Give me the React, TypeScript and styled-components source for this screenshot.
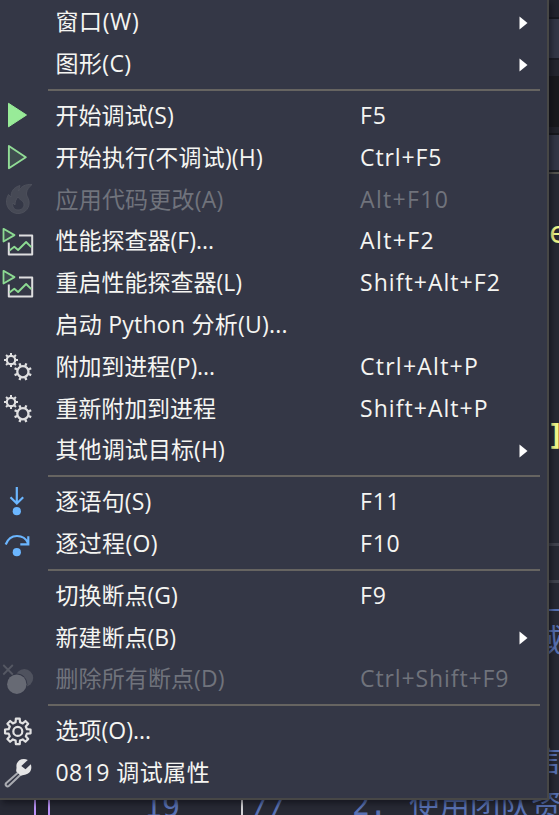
import React from "react";
import styled, { createGlobalStyle } from "styled-components";

const Global = createGlobalStyle`
  html, body { margin: 0; padding: 0; background: #272934; overflow: hidden; }
  * { box-sizing: border-box; }
`;

const Window = styled.div`
  position: relative;
  width: 559px;
  height: 815px;
  overflow: hidden;
  background: #272934;
  display: flex;
  flex-direction: column;
`;

/* Editor column that shows past the right edge of the menu */
const EditorEdge = styled.div`
  flex: none;
  width: 10px;
  height: 785px;
  align-self: flex-end;
  display: flex;
  flex-direction: column;
`;

const Band = styled.div<{ $h: number; $c?: string; $ink?: string; $size?: number; $shift?: number; $bold?: boolean }>`
  flex: none;
  height: ${(p) => p.$h}px;
  background: ${(p) => p.$c ?? "transparent"};
  color: ${(p) => p.$ink ?? "#5871b3"};
  font: ${(p) => (p.$bold ? 700 : 400)} ${(p) => p.$size ?? 27}px/${(p) => p.$h}px "DejaVu Sans Mono", "Noto Sans CJK SC", monospace;
  text-indent: ${(p) => p.$shift ?? 0}px;
  white-space: pre;
  overflow: hidden;
`;

/* Last editor line, below the menu */
const CodeLine = styled.div`
  flex: none;
  height: 38px;
  display: grid;
  grid-template-columns: 34px 2px 12px 2px 94px 97px 2px 9px 100px 57px 1fr;
  align-items: stretch;
  color: #5871b3;
  font: 30px/38px "DejaVu Sans Mono", "Noto Sans CJK SC", monospace;
  white-space: pre;
`;

const Guide = styled.span<{ $c: string }>`
  background: ${(p) => p.$c};
`;

const LineNumber = styled.span`
  font-size: 30px;
  line-height: 44px;
`;

const Code = styled.span`
  letter-spacing: -0.8px;
  line-height: 40px;
`;

const Comment = styled.span`
  font: 30.5px/36px "Noto Sans CJK SC", sans-serif;
`;

const Menu = styled.div`
  position: absolute;
  left: 0;
  top: 0;
  width: 549px;
  height: 799.5px;
  background: #343746;
  border: solid #474746;
  border-width: 0 2px 2px 0;
  box-shadow: 2px 3px 6px 0 rgba(8, 8, 14, 0.55);
  padding-top: 1.5px;
  display: flex;
  flex-direction: column;
`;

const Row = styled.div<{ $disabled?: boolean }>`
  flex: none;
  height: 41.8px;
  display: grid;
  grid-template-columns: 55.5px 304.5px 154px 1fr;
  align-items: center;
  color: ${(p) => (p.$disabled ? "#70737c" : "#f5f5f2")};
  font-family: "Open Sans", "Noto Sans CJK SC", sans-serif;
  font-size: 23px;
  line-height: 38px;
  white-space: pre;
`;

const IconCell = styled.span`
  display: flex;
  height: 41px;
  svg { display: block; }
`;

const Caption = styled.span<{ $track: number }>`
  padding-bottom: 2px;
  letter-spacing: ${(p) => p.$track}px;
`;

const Arrow = styled.svg`
  display: block;
  margin: 1px 0 0 5px;
`;

const Separator = styled.div`
  flex: none;
  height: 10px;
  margin: 0 7px 0 48px;
  display: flex;
  align-items: center;
  &::before { content: ""; height: 2px; width: 492px; background: #666461; }
`;

type IconName = "play" | "playOutline" | "flame" | "profiler" | "gears" | "into" | "over" | "breakpoints" | "gear" | "wrench";

const gearPath = (cx: number, cy: number, outer: number, inner: number, count: number) => {
  const pts: string[] = [];
  const step = (Math.PI * 2) / count;
  for (let i = 0; i < count; i++) {
    const a = i * step - Math.PI / 2;
    [[-0.3, inner], [-0.19, outer], [0.19, outer], [0.3, inner]].forEach(([o, r]) => {
      pts.push(`${(cx + Math.cos(a + o * step) * r).toFixed(2)} ${(cy + Math.sin(a + o * step) * r).toFixed(2)}`);
    });
  }
  return `M${pts.join("L")}Z`;
};

const teeth = (cx: number, cy: number, r1: number, r2: number) => {
  let d = "";
  for (let i = 0; i < 8; i++) {
    const a = (i * Math.PI) / 4;
    d += `M${(cx + Math.cos(a) * r1).toFixed(2)} ${(cy + Math.sin(a) * r1).toFixed(2)}L${(cx + Math.cos(a) * r2).toFixed(2)} ${(cy + Math.sin(a) * r2).toFixed(2)}`;
  }
  return d;
};

const drawings: Record<IconName, React.ReactNode> = {
  play: <path d="M8.5 8.3 26.5 20 8.5 31.8Z" fill="#98eb98" stroke="#98eb98" strokeLinejoin="round" />,
  playOutline: <path d="M8.9 9 25.8 20.2 8.9 31.3Z" fill="#98eb98" fillOpacity=".12" stroke="#91dc96" strokeWidth="1.9" strokeLinejoin="round" />,
  flame: (
    <path d="M32 5.500C26 5 21 7 18.500 12L20 6.500C13 8.500 11 13 11 18L8.500 15.500C6 20 6 24 7.500 27.500C9.500 32 14 35 19 34.500C26 34 30 28 29 22C28.500 18.500 26 17 26.500 14C27 10.500 29 8 32 5.500ZM18 18C19 21 24 21 24 26C24 29 21 31 18 31C14 31 12 28 13 24L15 26C15 23 16 20 18 18Z" fill="#464955" stroke="#50535e" strokeWidth=".8" fillRule="evenodd" />
  ),
  profiler: (
    <g fill="none" strokeLinejoin="round">
      <path d="M19 14.600H32.200V33.600H8.800V21.500" stroke="#dededf" strokeWidth="2" />
      <path d="m9.500 29.500 4.800-3.800 3.800 3.300 8-8 5.200 5.200" stroke="#8cda92" strokeWidth="1.900" />
      <path d="M3.500 7.800 14.500 14.100 3.500 20.500Z" fill="#8cda92" fillOpacity=".12" stroke="#8cda92" strokeWidth="1.800" />
    </g>
  ),
  gears: (
    <g fill="none" stroke="#dfdfe0">
      <circle cx="11" cy="14" r="4.200" strokeWidth="2.200" />
      <path d={teeth(11, 14, 4.5, 7)} strokeWidth="2" />
      <circle cx="22.900" cy="25.700" r="5.600" strokeWidth="2.300" />
      <path d={teeth(22.9, 25.7, 6, 9)} strokeWidth="2.300" transform="rotate(22.5 22.9 25.7)" />
    </g>
  ),
  into: (
    <g fill="none" stroke="#6bb6ff" strokeWidth="2.200">
      <path d="M16.800 5V21M10.500 15.300 16.800 21.500 23.200 15.300" />
      <circle cx="16.800" cy="29.200" r="4.100" fill="#6bb6ff" stroke="none" />
    </g>
  ),
  over: (
    <g fill="none" stroke="#6bb6ff" strokeWidth="2.200">
      <path d="M5.700 21.500C8 15.500 12 13 17 13c5 0 9 2.500 11 7M28.300 13.300V21.300H20.300" />
      <circle cx="16.800" cy="29.200" r="4.100" fill="#6bb6ff" stroke="none" />
    </g>
  ),
  breakpoints: (
    <g>
      <circle cx="24.300" cy="19" r="8.900" fill="#4f525e" />
      <circle cx="16.800" cy="25.200" r="10.600" fill="#343746" />
      <circle cx="16.800" cy="25.200" r="9.700" fill="#676a74" />
      <path d="m3.300 6 9.500 9.500M12.800 6 3.300 15.500" stroke="#555863" strokeWidth="1.800" />
    </g>
  ),
  gear: (
    <g fill="none" stroke="#e1e1e2" strokeWidth="2.200" strokeLinejoin="round">
      <path d={gearPath(17.8, 20.4, 12.9, 9.4, 8)} />
      <circle cx="17.800" cy="20.400" r="4.500" />
    </g>
  ),
  wrench: (
    <g strokeLinejoin="round">
      <path d="M18.200 20.500 6.300 31C4.500 33 7 35.500 9 33.800L20.800 22.500" fill="#343746" stroke="#a9abb1" strokeWidth="2" />
      <path d="M27.800 8C22 5.200 15.500 9.200 16.500 15.200C16.500 17.700 15.800 18.700 16.500 19.700L20.800 23.700C22 23.700 23 22.900 25 22.700C30 22.200 32.500 17.200 30.800 12.200L25.500 17.300 21.300 14Z" fill="#e5e5e6" />
    </g>
  ),
};

const Icon = ({ name }: { name: IconName }) => (
  <svg width="40" height="40" viewBox="0 0 40 40" aria-hidden="true">{drawings[name]}</svg>
);

interface Item { label: string; track?: number; keys?: string; keyTrack?: number; icon?: IconName; disabled?: boolean; sub?: boolean }

const groups: Item[][] = [
  [{ label: "窗口(W)", track: 0.6, sub: true }, { label: "图形(C)", track: 0.4, sub: true }],
  [
    { label: "开始调试(S)", keys: "F5", keyTrack: 0.8, icon: "play" },
    { label: "开始执行(不调试)(H)", track: 0.2, keys: "Ctrl+F5", keyTrack: 0.9, icon: "playOutline" },
    { label: "应用代码更改(A)", track: 0.2, keys: "Alt+F10", keyTrack: 1.35, icon: "flame", disabled: true },
    { label: "性能探查器(F)...", keys: "Alt+F2", keyTrack: 1.4, icon: "profiler" },
    { label: "重启性能探查器(L)", keys: "Shift+Alt+F2", keyTrack: 1.05, icon: "profiler" },
    { label: "启动 Python 分析(U)...", track: 0.24 },
    { label: "附加到进程(P)...", track: -0.1, keys: "Ctrl+Alt+P", keyTrack: 1.25, icon: "gears" },
    { label: "重新附加到进程", track: -0.1, keys: "Shift+Alt+P", keyTrack: 1.05, icon: "gears" },
    { label: "其他调试目标(H)", track: 0.1, sub: true },
  ],
  [
    { label: "逐语句(S)", track: 0.1, keys: "F11", keyTrack: 0.8, icon: "into" },
    { label: "逐过程(O)", track: 0.3, keys: "F10", keyTrack: 0.8, icon: "over" },
  ],
  [
    { label: "切换断点(G)", keys: "F9", keyTrack: 0.8 },
    { label: "新建断点(B)", sub: true },
    { label: "删除所有断点(D)", track: 0.1, keys: "Ctrl+Shift+F9", keyTrack: 0.9, icon: "breakpoints", disabled: true },
  ],
  [{ label: "选项(O)...", icon: "gear" }, { label: "0819 调试属性", track: 0.45, icon: "wrench" }],
];

interface Strip { h: number; c?: string; ink?: string; size?: number; shift?: number; text?: string; bold?: boolean }

const strips: Strip[] = [
  { h: 17, c: "#22232d" }, { h: 2, c: "#181920" }, { h: 39, c: "#343746" }, { h: 2, c: "#1b1c24" },
  { h: 16, c: "#24252e" }, { h: 51, c: "#19191d" }, { h: 6, c: "#22232b" }, { h: 2, c: "#17181d" },
  { h: 35, c: "#343746" }, { h: 2, c: "#1b1c22" }, { h: 2, c: "#55544f" },
  { h: 42 }, { h: 34, ink: "#f1fa8c", size: 30, shift: 0, text: "e" },
  { h: 168 }, { h: 34, ink: "#f1fa8c", size: 29, shift: -2, text: "]", bold: true },
  { h: 91 }, { h: 3, c: "#41434e" }, { h: 34 }, { h: 3, c: "#41434e" },
  { h: 26 }, { h: 2, c: "#5871b3" }, { h: 11 }, { h: 36, size: 31, shift: -17, text: "域" },
  { h: 84 }, { h: 36, size: 31, shift: -17, text: "言" },
];

export default function App() {
  return (
    <>
      <Global />
      <Window>
        <EditorEdge>
          {strips.map((s, i) => (
            <Band key={i} $h={s.h} $c={s.c} $ink={s.ink} $size={s.size} $shift={s.shift} $bold={s.bold}>{s.text}</Band>
          ))}
        </EditorEdge>
        <CodeLine>
          <span />
          <Guide $c="#bd93f9" />
          <Guide $c="#1e1f28" />
          <Guide $c="#bd93f9" />
          <span />
          <LineNumber>19</LineNumber>
          <Guide $c="#d5d5d8" />
          <span />
          <Code>//</Code>
          <Code>2.</Code>
          <Comment>使用团队资</Comment>
        </CodeLine>
        <Menu role="menu">
          {groups.map((g, i) => (
            <React.Fragment key={i}>
              {i > 0 && <Separator role="separator" />}
              {g.map((it) => (
                <Row key={it.label} $disabled={it.disabled} role="menuitem">
                  <IconCell>{it.icon && <Icon name={it.icon} />}</IconCell>
                  <Caption $track={it.track ?? 0}>{it.label}</Caption>
                  <Caption $track={it.keyTrack ?? 0}>{it.keys}</Caption>
                  {it.sub ? <Arrow width="9" height="14" viewBox="0 0 9 14"><path d="M.5.5 8.500 7 .5 13.500Z" fill="#fff" /></Arrow> : <span />}
                </Row>
              ))}
            </React.Fragment>
          ))}
        </Menu>
      </Window>
    </>
  );
}
